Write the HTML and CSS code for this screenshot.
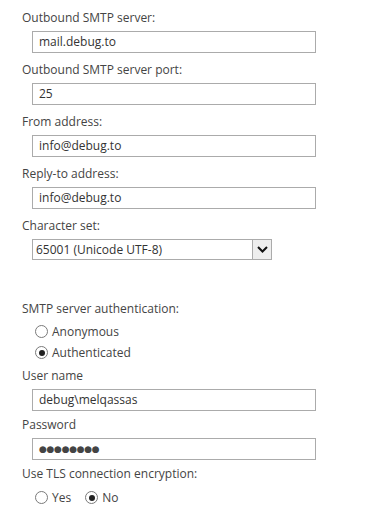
FILE: index.html
```html
<!DOCTYPE html>
<html>
<head>
<meta charset="utf-8">
<link rel="stylesheet" href="styles.css">
</head>
<body>
<div class="form">
  <div class="field">
    <div class="label">Outbound SMTP server:</div>
    <div class="input">mail.debug.to</div>
  </div>
  <div class="field">
    <div class="label">Outbound SMTP server port:</div>
    <div class="input">25</div>
  </div>
  <div class="field">
    <div class="label">From address:</div>
    <div class="input">info@debug.to</div>
  </div>
  <div class="field">
    <div class="label">Reply-to address:</div>
    <div class="input">info@debug.to</div>
  </div>
  <div class="field">
    <div class="label">Character set:</div>
    <div class="select">
      <span class="select-text">65001 (Unicode UTF-8)</span>
      <span class="select-btn"><svg width="11" height="7" viewBox="0 0 11 7"><path d="M1 1 L5.5 5.5 L10 1" fill="none" stroke="#111" stroke-width="2"/></svg></span>
    </div>
  </div>

  <div class="section">
    <div class="label">SMTP server authentication:</div>
    <div class="radios-col">
      <div class="radio"><span class="dot"></span>Anonymous</div>
      <div class="radio"><span class="dot on"></span>Authenticated</div>
    </div>
    <div class="field tight">
      <div class="label">User name</div>
      <div class="input">debug\melqassas</div>
    </div>
    <div class="field tight">
      <div class="label">Password</div>
      <div class="input pw">●●●●●●●●</div>
    </div>
    <div class="label">Use TLS connection encryption:</div>
    <div class="radios-row">
      <div class="radio"><span class="dot"></span>Yes</div>
      <div class="radio"><span class="dot on"></span>No</div>
    </div>
  </div>
</div>
</body>
</html>
```
FILE: styles.css
```css
html, body {
  margin: 0;
  padding: 0;
  background: #fff;
}
.form {
  padding: 9px 0 0 22px;
  font-family: "Open Sans", "Noto Sans", sans-serif;
  font-size: 12px;
  color: #444;
}
.field {
  margin-bottom: 8px;
}
.field.tight {
  margin-bottom: 5px;
}
.label {
  line-height: 18px;
  height: 18px;
}
.input {
  margin: 4px 0 0 10px;
  height: 20px;
  border: 1px solid #ababab;
  line-height: 20px;
  padding-left: 6px;
  box-sizing: content-box;
  width: 276px;
  color: #333;
}
.pw {
  font-family: "DejaVu Sans", sans-serif;
  font-size: 9px;
  letter-spacing: -0.3px;
  color: #444;
}
.select {
  margin: 4px 0 0 10px;
  width: 238px;
  height: 19px;
  border: 1px solid #ababab;
  display: flex;
  align-items: stretch;
}
.select-text {
  flex: 1;
  line-height: 19px;
  padding-left: 3px;
  color: #333;
}
.select-btn {
  width: 18px;
  border-left: 1px solid #ababab;
  background: #eee;
  display: flex;
  align-items: center;
  justify-content: center;
}
.section {
  margin-top: 40px;
}
.radios-col {
  margin: 3px 0 4px 13px;
}
.radios-col .radio {
  height: 21px;
}
.radio {
  display: flex;
  align-items: center;
  line-height: 21px;
}
.dot {
  width: 13px;
  height: 13px;
  border: 1px solid #7a7a7a;
  border-radius: 50%;
  margin-right: 4px;
  box-sizing: border-box;
  position: relative;
  background: #fff;
}
.dot.on::after {
  content: "";
  position: absolute;
  left: 2.5px;
  top: 2.5px;
  width: 6px;
  height: 6px;
  border-radius: 50%;
  background: #222;
}
.radios-row {
  display: flex;
  gap: 14px;
  margin: 4px 0 0 13px;
}
```
